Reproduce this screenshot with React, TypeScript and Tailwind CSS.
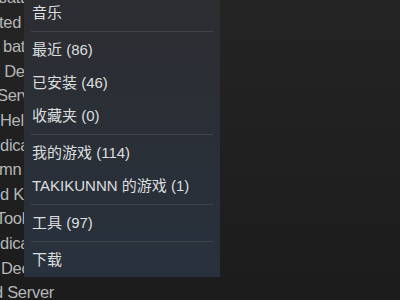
import React from 'react';

// library rows behind the menu, only their first letters show
const libraryRows: { text: string; shift: string }[] = [
  { text: 'batt', shift: 'ml-[-2px]' },
  { text: 'ted', shift: 'ml-[-1px]' },
  { text: 'bat', shift: 'ml-[3px]' },
  { text: 'd De', shift: 'ml-[-9px]' },
  { text: 'Serv', shift: 'ml-[-3px]' },
  { text: 'Hell', shift: 'ml-0' },
  { text: 'dica', shift: 'ml-0' },
  { text: 'mn', shift: 'ml-[-1px]' },
  { text: 'd K', shift: 'ml-0' },
  { text: 'Tool', shift: 'ml-[-4px]' },
  { text: 'dica', shift: 'ml-0' },
  { text: 'Dec', shift: 'ml-[1px]' },
  { text: 'd Server', shift: 'ml-[-6px]' },
];

type MenuEntry = { label: string } | 'divider';

const menuEntries: MenuEntry[] = [
  { label: '音乐' },
  'divider',
  { label: '最近 (86)' },
  { label: '已安装 (46)' },
  { label: '收藏夹 (0)' },
  'divider',
  { label: '我的游戏 (114)' },
  { label: 'TAKIKUNNN 的游戏 (1)' },
  'divider',
  { label: '工具 (97)' },
  'divider',
  { label: '下载' },
];

const ContextMenu: React.FC = () => (
  <div className="absolute left-[24px] top-[-3px] w-[196px] flex flex-col bg-linear-to-b from-[#2c2d31] to-[#28313d]">
    {menuEntries.map((entry, i) =>
      entry === 'divider' ? (
        <div key={i} className="mx-[7px] mt-[1px] mb-[2px] h-px bg-[#404348]" />
      ) : (
        <div
          key={i}
          className="h-[33px] flex items-center pl-[8px] text-[15px] text-[#dcdedf] whitespace-nowrap"
        >
          {entry.label}
        </div>
      )
    )}
  </div>
);

export default function App() {
  return (
    <div className="relative w-[400px] h-[300px] overflow-hidden bg-linear-to-b from-[#242424] to-[#1c1c1c] font-['Liberation_Sans','Noto_Sans_CJK_SC',sans-serif]">
      <div className="flex flex-col mt-[-15px]">
        {libraryRows.map((row, i) => (
          <div
            key={i}
            className="h-[24.6px] leading-[24.6px] text-[16.5px] tracking-[-0.3px] text-[#b4b6b8] whitespace-nowrap"
          >
            <span className={`inline-block ${row.shift}`}>{row.text}</span>
          </div>
        ))}
      </div>
      <ContextMenu />
    </div>
  );
}
